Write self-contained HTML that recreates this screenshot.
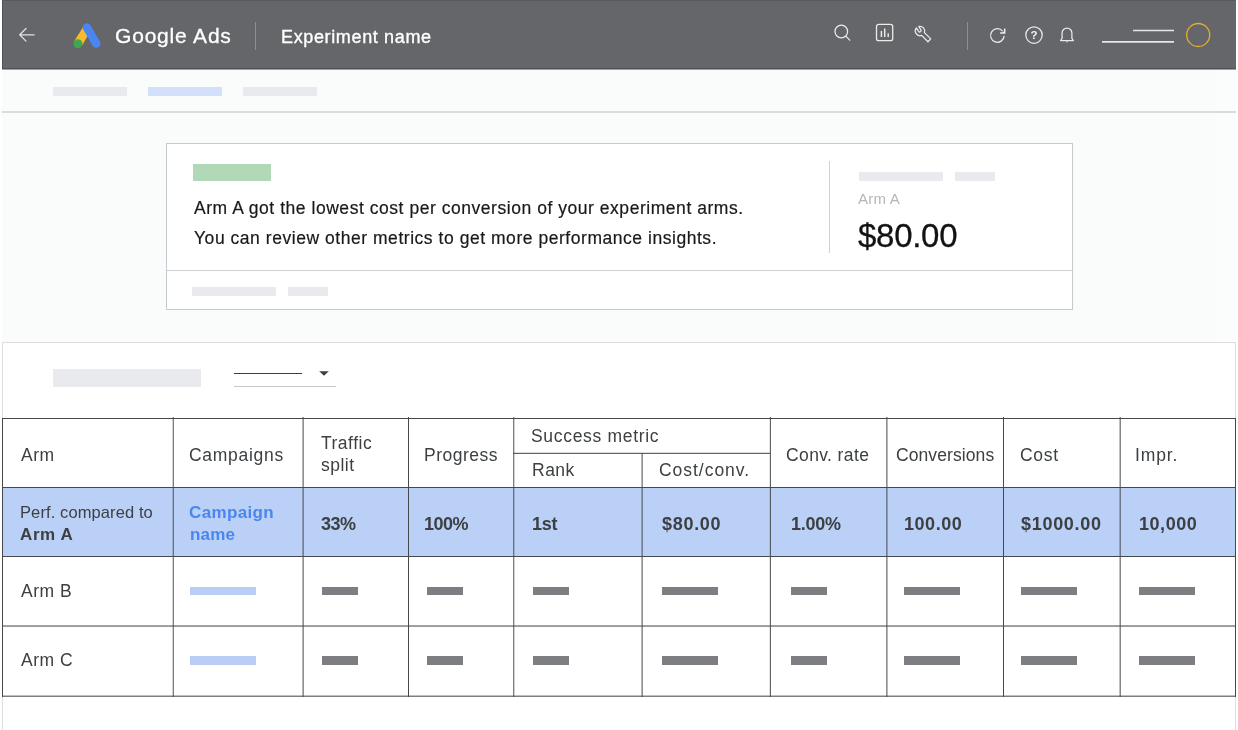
<!DOCTYPE html>
<html lang="en">
<head>
<meta charset="utf-8">
<title>Google Ads – Experiment name</title>
<style>
*{box-sizing:border-box;margin:0;padding:0}
html,body{width:1238px;height:730px;overflow:hidden;background:#fafcfb}
body{position:relative;font-family:"Liberation Sans",Arial,sans-serif;color:#3c4043}
div,span,svg{position:absolute}
.t{white-space:nowrap;line-height:1;will-change:transform}
.ph{background:#e8eaed}
.bar{background:#7c7e82;height:8px}
.bbar{background:#b9cdf5;height:8px;left:190px;width:66px}
.vl{width:1px;background:#4d4f52}
.hl{height:1px;background:#4d4f52}
.h{font-size:17.5px;color:#3c4043}
.b{font-size:18px;font-weight:bold;color:#3c4043}
.r2{top:587px}.r3{top:656px;height:8.5px !important}
</style>
</head>
<body>
<!-- white side strips -->
<div style="left:0;top:0;width:2px;height:730px;background:#fff"></div>
<div style="left:1236px;top:0;width:2px;height:730px;background:#fff"></div>

<div style="left:1217px;top:70px;width:19px;height:272px;background:#fbfdfc"></div>
<!-- ===== header ===== -->
<div id="hdr" style="left:2px;top:0;width:1234px;height:69px;background:#646669;border-left:1px solid #505255;border-top:1px solid #57595c;border-bottom:1px solid #505255"></div>
<div style="left:2px;top:69px;width:1234px;height:1px;background:#9fa1a3"></div>


<!-- back arrow -->
<svg style="left:16px;top:24px" width="22" height="22" viewBox="0 0 22 22" fill="none" stroke="#dfe0e2" stroke-width="1.3" stroke-linecap="round" stroke-linejoin="round"><path d="M18.1 10.800H3.900M10 4.500L3.7 10.800l6.3 6.3"/></svg>
<!-- Google Ads logo -->
<svg id="logo" style="left:72px;top:23px" width="30" height="27" viewBox="0 0 30 27">
  <path d="M2 18.500L11.6 3.200l7.3 4.200L9.7 23z" fill="#f8bb2d"/>
  <path d="M11.3 6.6a4.2 4.2 0 0 1 7.3-4.2l9.3 16.1a4.2 4.2 0 0 1-7.3 4.2z" fill="#4a85f2"/>
  <circle cx="5.9" cy="20.7" r="4.5" fill="#3fa652"/>
</svg>
<div class="t" id="ga" style="left:115px;top:25px;font-size:21px;color:#fff;-webkit-text-stroke:.3px #fff;letter-spacing:0.81px">Google Ads</div>
<div style="left:255px;top:21.5px;width:1px;height:28.5px;background:#8d8f93"></div>
<div class="t" id="en" style="left:281px;top:28px;font-size:18px;color:#fff;-webkit-text-stroke:.35px #fff;letter-spacing:0.64px">Experiment name</div>

<!-- search -->
<svg style="left:830px;top:20px" width="24" height="24" viewBox="0 0 24 24" fill="none" stroke="#ebebec" stroke-width="1.25" stroke-linecap="round"><circle cx="11.3" cy="11.5" r="6.3"/><path d="M15.9 16.1l3.8 4.1"/></svg>
<!-- chart -->
<svg style="left:872px;top:20px" width="24" height="24" viewBox="0 0 24 24" fill="none" stroke="#ebebec" stroke-width="1.25" stroke-linecap="butt"><rect x="4.5" y="4.4" width="16.2" height="16.2" rx="2.2" stroke-width="1.3"/><path d="M9.4 16.9v-6M12.7 16.9V8.4M16.2 16.9v-3.7" stroke-width="1.45"/></svg>
<!-- wrench -->
<svg id="wr" style="left:907.9px;top:18.6px" width="28" height="28" viewBox="0 0 28 28" fill="none" stroke="#ebebec" stroke-width="1.25" stroke-linejoin="round"><path d="M8.44 8.94L10.55 12.32A1.4 1.4 0 0 0 12.92 10.83L10.81 7.45A4.7 4.7 0 0 1 16.42 13.59L22.75 19.92L19.92 22.75L13.59 16.42A4.7 4.7 0 0 1 8.44 8.94Z"/></svg>
<!-- divider -->
<div style="left:967px;top:21.5px;width:1px;height:28.500px;background:#8d8f93"></div>
<!-- refresh -->
<svg style="left:986px;top:24px" width="24" height="24" viewBox="0 0 24 24" fill="none" stroke="#ebebec" stroke-width="1.25" stroke-linecap="butt" stroke-linejoin="miter"><path d="M16.6 7.1A6.8 6.8 0 1 0 18.19 11.9"/><path d="M18.7 4.500V9.100H14.1" stroke-width="1.5"/><path d="M18.7 6.500L16.2 9.100H18.700z" fill="#f0f0f1" stroke="none"/></svg>
<!-- help -->
<svg style="left:1022px;top:23px;will-change:transform" width="24" height="24" viewBox="0 0 24 24" fill="none" stroke="#ebebec" stroke-width="1.25"><circle cx="12" cy="12.1" r="8.2"/><text x="12" y="16.3" text-anchor="middle" font-family="Liberation Sans, Arial, sans-serif" font-weight="bold" font-size="11.5" fill="#f0f0f1" stroke="none">?</text></svg>
<!-- bell -->
<svg style="left:1055px;top:23px" width="24" height="24" viewBox="0 0 24 24" fill="none" stroke="#ebebec" stroke-width="1.25" stroke-linejoin="round" stroke-linecap="round"><path d="M5.6 17.500h12.800l-1.5-2.200v-5.300a4.9 4.9 0 0 0-9.8 0v5.300z"/><path d="M10.8 18.600a1.3 1.3 0 0 0 2.4 0z" fill="#f0f0f1" stroke="none"/></svg>
<!-- account lines + avatar -->
<svg style="left:1096px;top:20px" width="120" height="30" viewBox="0 0 120 30" fill="none"><path d="M37 10.400H78" stroke="#e6e6e7" stroke-width="1.5"/><path d="M6 21.800H78" stroke="#e6e6e7" stroke-width="1.8"/><circle cx="102.2" cy="15" r="11.5" stroke="#e3ad2e" stroke-width="1.35"/></svg>

<!-- ===== tab strip ===== -->
<div class="ph" style="left:52.5px;top:87px;width:74.5px;height:9px"></div>
<div class="ph" style="left:147.5px;top:87px;width:74.5px;height:9px;background:#d2e0fb"></div>
<div class="ph" style="left:242.5px;top:87px;width:74.5px;height:9px"></div>
<div style="left:2px;top:111px;width:1234px;height:2px;background:#d9dbdd"></div>

<!-- ===== summary card ===== -->
<div id="card" style="left:166px;top:143px;width:907px;height:167px;background:#fff;border:1px solid #c6c9ce"></div>
<div style="left:167px;top:270px;width:905px;height:1px;background:#cdd0d4"></div>
<div style="left:193px;top:164px;width:78px;height:17px;background:#b1d8b7"></div>
<div class="t" id="l1" style="left:194px;top:200px;font-size:17.5px;color:#18191b;-webkit-text-stroke:.2px #18191b;letter-spacing:0.54px">Arm A got the lowest cost per conversion of your experiment arms.</div>
<div class="t" id="l2" style="left:194px;top:230px;font-size:17.5px;color:#18191b;-webkit-text-stroke:.2px #18191b;letter-spacing:0.54px">You can review other metrics to get more performance insights.</div>
<div class="ph" style="left:192px;top:286.5px;width:84px;height:9px"></div>
<div class="ph" style="left:288px;top:286.5px;width:40px;height:9px"></div>
<div style="left:829px;top:161px;width:1px;height:91.5px;background:#cdd0d4"></div>
<div class="ph" style="left:858.5px;top:172px;width:84px;height:9px"></div>
<div class="ph" style="left:954.5px;top:172px;width:40px;height:9px"></div>
<div class="t" id="arma" style="left:858px;top:191px;font-size:15px;color:#b3b6ba;letter-spacing:0.25px">Arm A</div>
<div class="t" id="price" style="left:858px;top:219px;font-size:33px;color:#111214;-webkit-text-stroke:.3px #111214;letter-spacing:-0.28px">$80.00</div>

<!-- ===== table panel ===== -->
<div id="panel" style="left:2px;top:341.5px;width:1234px;height:400px;background:#fff;border:1px solid #dcdee1"></div>
<div class="ph" style="left:52.5px;top:369px;width:148.5px;height:18px"></div>
<div style="left:234px;top:372.5px;width:68px;height:1px;background:#3c4043"></div>
<div style="left:234px;top:386px;width:102px;height:1px;background:#c4c6c9"></div>
<svg style="left:319px;top:371px" width="10" height="5" viewBox="0 0 10 5"><path d="M0.2 0.300h9.600L5 4.800z" fill="#3c4043"/></svg>

<!-- blue row -->
<div style="left:3px;top:488px;width:1233px;height:68px;background:#bbd0f7"></div>

<!-- horizontal lines -->
<div class="hl" style="left:2px;top:418px;width:1234px;background:rgba(68,72,75,1)"></div>
<div class="hl" style="left:2px;top:487px;width:1234px;background:rgba(68,72,75,1)"></div>
<div class="hl" style="left:2px;top:556px;width:1234px;background:rgba(68,72,75,1)"></div>
<div class="hl" style="left:2px;top:625px;width:1234px;height:2px;background:linear-gradient(to bottom,rgba(68,72,75,0.5) 50%,rgba(68,72,75,0.55) 50%)"></div>
<div class="hl" style="left:2px;top:695px;width:1234px;height:2px;background:linear-gradient(to bottom,rgba(68,72,75,0.35) 50%,rgba(68,72,75,0.7) 50%)"></div>
<div class="hl" style="left:513px;top:452px;width:257px;height:2px;background:linear-gradient(to bottom,rgba(68,72,75,0.2) 50%,rgba(68,72,75,0.85) 50%)"></div>
<!-- vertical lines -->
<div class="vl" style="left:2px;top:418px;height:279px;background:rgba(68,72,75,1)"></div>
<div class="vl" style="left:172px;top:417px;height:279.5px;width:2px;background:linear-gradient(to right,rgba(68,72,75,0.25) 50%,rgba(68,72,75,0.7) 50%)"></div>
<div class="vl" style="left:302px;top:417px;height:279.5px;width:2px;background:linear-gradient(to right,rgba(68,72,75,0.4) 50%,rgba(68,72,75,0.6) 50%)"></div>
<div class="vl" style="left:408px;top:417px;height:279.5px;background:rgba(68,72,75,1)"></div>
<div class="vl" style="left:513px;top:417px;height:279.5px;width:2px;background:linear-gradient(to right,rgba(68,72,75,0.7) 50%,rgba(68,72,75,0.25) 50%)"></div>
<div class="vl" style="left:641px;top:453px;height:244px;width:2px;background:linear-gradient(to right,rgba(68,72,75,0.4) 50%,rgba(68,72,75,0.6) 50%)"></div>
<div class="vl" style="left:769px;top:417px;height:279.5px;width:2px;background:linear-gradient(to right,rgba(68,72,75,0.15) 50%,rgba(68,72,75,0.85) 50%)"></div>
<div class="vl" style="left:886px;top:417px;height:279.5px;width:2px;background:linear-gradient(to right,rgba(68,72,75,0.6) 50%,rgba(68,72,75,0.4) 50%)"></div>
<div class="vl" style="left:1003px;top:417px;height:279.5px;background:rgba(68,72,75,1)"></div>
<div class="vl" style="left:1119px;top:417px;height:279.5px;width:2px;background:linear-gradient(to right,rgba(68,72,75,0.35) 50%,rgba(68,72,75,0.65) 50%)"></div>
<div class="vl" style="left:1235px;top:418px;height:279px;background:rgba(68,72,75,1)"></div>

<!-- header labels -->
<div class="t h" id="h1" style="left:21px;top:446.8px;letter-spacing:0.5px">Arm</div>
<div class="t h" id="h2" style="left:189px;top:446.8px;letter-spacing:0.71px">Campaigns</div>
<div class="t h" id="h3a" style="left:321px;top:434.8px;letter-spacing:0.5px">Traffic</div>
<div class="t h" id="h3b" style="left:321px;top:457.3px;letter-spacing:0.5px">split</div>
<div class="t h" id="h4" style="left:424px;top:446.8px;letter-spacing:0.51px">Progress</div>
<div class="t h" id="h5" style="left:531px;top:427.8px;letter-spacing:0.69px">Success metric</div>
<div class="t h" id="h5a" style="left:531.5px;top:461.8px;letter-spacing:0.5px">Rank</div>
<div class="t h" id="h5b" style="left:659px;top:461.8px;letter-spacing:0.97px">Cost/conv.</div>
<div class="t h" id="h6" style="left:786px;top:446.8px;letter-spacing:0.39px">Conv. rate</div>
<div class="t h" id="h7" style="left:896px;top:446.8px;letter-spacing:0.09px">Conversions</div>
<div class="t h" id="h8" style="left:1020px;top:446.8px;letter-spacing:0.67px">Cost</div>
<div class="t h" id="h9" style="left:1135px;top:446.8px;letter-spacing:0.85px">Impr.</div>

<!-- row 1 -->
<div class="t" id="a1" style="left:20px;top:504px;font-size:16.5px;color:#3c4043;letter-spacing:0.1px">Perf. compared to</div>
<div class="t b" id="a2" style="font-size:17px;left:20px;top:525.5px;letter-spacing:0.6px">Arm A</div>
<div class="t b" id="c1" style="font-size:17px;left:189px;top:503.5px;color:#4a86ee;letter-spacing:0.35px">Campaign</div>
<div class="t b" id="c2" style="font-size:17px;left:190px;top:526px;color:#4a86ee;letter-spacing:0.2px">name</div>
<div class="t b" id="v1" style="left:321px;top:514.5px;letter-spacing:-0.5px">33%</div>
<div class="t b" id="v2" style="left:424px;top:514.5px;letter-spacing:-0.5px">100%</div>
<div class="t b" id="v3" style="left:532px;top:514.5px;letter-spacing:-0.3px">1st</div>
<div class="t b" id="v4" style="left:662px;top:514.5px;letter-spacing:0.7px">$80.00</div>
<div class="t b" id="v5" style="left:791px;top:514.5px;letter-spacing:-0.25px">1.00%</div>
<div class="t b" id="v6" style="left:904px;top:514.5px;letter-spacing:0.54px">100.00</div>
<div class="t b" id="v7" style="left:1021px;top:514.5px;letter-spacing:0.7px">$1000.00</div>
<div class="t b" id="v8" style="left:1139px;top:514.5px;letter-spacing:0.55px">10,000</div>

<!-- row 2 / 3 -->
<div class="t h" id="b1" style="left:21px;top:583.3px;letter-spacing:0.53px">Arm B</div>
<div class="t h" id="b2" style="left:21px;top:652.3px;letter-spacing:0.53px">Arm C</div>
<div class="bbar r2"></div><div class="bbar r3"></div>
<div class="bar r2" style="left:321.5px;width:36px"></div><div class="bar r3" style="left:321.5px;width:36px"></div>
<div class="bar r2" style="left:427px;width:36px"></div><div class="bar r3" style="left:427px;width:36px"></div>
<div class="bar r2" style="left:532.5px;width:36px"></div><div class="bar r3" style="left:532.5px;width:36px"></div>
<div class="bar r2" style="left:662px;width:55.5px"></div><div class="bar r3" style="left:662px;width:55.5px"></div>
<div class="bar r2" style="left:790.5px;width:36px"></div><div class="bar r3" style="left:790.5px;width:36px"></div>
<div class="bar r2" style="left:903.5px;width:56px"></div><div class="bar r3" style="left:903.5px;width:56px"></div>
<div class="bar r2" style="left:1021px;width:56px"></div><div class="bar r3" style="left:1021px;width:56px"></div>
<div class="bar r2" style="left:1139px;width:56px"></div><div class="bar r3" style="left:1139px;width:56px"></div>
</body>
</html>
